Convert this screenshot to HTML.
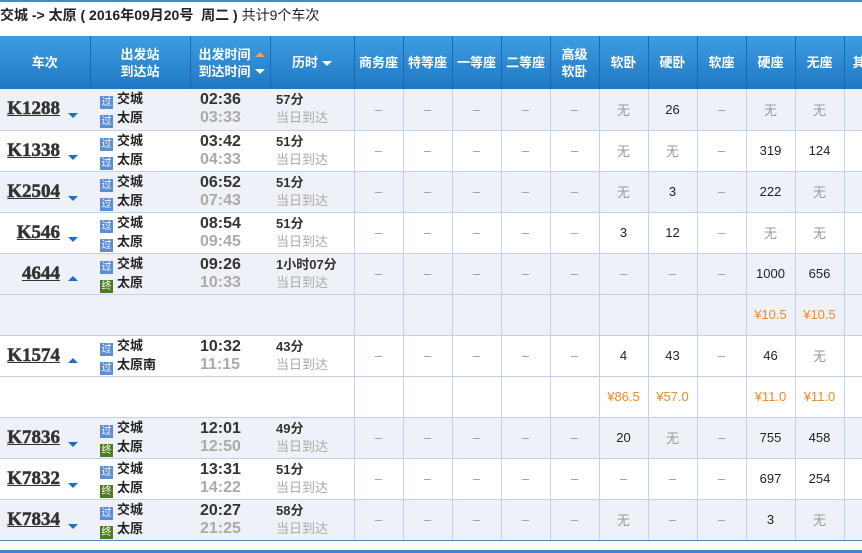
<!DOCTYPE html>
<html><head><meta charset="utf-8"><style>
*{margin:0;padding:0;box-sizing:border-box}
body{width:862px;height:553px;overflow:hidden;background:#fff;font-family:"Liberation Sans","Noto Sans CJK SC",sans-serif;color:#333;position:relative}
.topline{position:absolute;left:0;top:0;width:862px;height:2px;background:#3a8ed0}
.title{position:absolute;left:0;top:5px;font-size:14px;font-weight:bold;color:#222;white-space:nowrap}
.title span{font-weight:normal}
.wrap{position:absolute;left:0;top:36px;width:862px;height:505px;overflow:hidden}
table{border-collapse:collapse;table-layout:fixed;width:895px}
th{height:53px;background:linear-gradient(#3e9de0,#1f78c4);color:#fff;font-size:13px;font-weight:bold;line-height:17px;position:relative}
th.s{border-right:1px solid #1a6aad}
td{height:41px;border-bottom:1px solid #c3d3e3;font-size:13px;text-align:center;vertical-align:middle}
td.g{border-left:1px solid #c3d3e3;color:#999}
tr.b td{background:#eef1f8}
td.g.num{color:#222}
td.g.pr{color:#f08a24}
.tn{text-align:left;padding-left:0;position:relative}
.tn a{position:absolute;right:30px;top:9px;font-family:"Liberation Serif",serif;font-weight:900;font-size:19px;color:#333;text-decoration:underline;-webkit-text-stroke:0.5px #333}
.dn{position:absolute;left:68px;top:24px;width:0;height:0;border-left:5px solid transparent;border-right:5px solid transparent;border-top:5px solid #1c6ec6}
.up{position:absolute;left:68px;top:22px;width:0;height:0;border-left:5px solid transparent;border-right:5px solid transparent;border-bottom:5px solid #1c6ec6}
.st{text-align:left;padding-left:10px;font-weight:bold;line-height:18px;font-size:13px;color:#222}
.ic{display:inline-block;width:13px;height:13px;background:#5b8ed6;color:#fff;font-size:10px;line-height:13px;text-align:center;vertical-align:-2px;margin-right:4px;font-weight:normal}
.ic.z{background:#4e7b1e}
.tm{text-align:left;padding-left:10px;font-weight:bold;font-size:16px;line-height:18px;color:#333}
.tm i{font-style:normal;color:#aaa}
.du{text-align:left;padding-left:6px;font-size:13px;line-height:18px}
.du b{color:#333}
.du i{font-style:normal;color:#aaa}
.tri{display:inline-block;width:0;height:0;border-left:5px solid transparent;border-right:5px solid transparent;margin-left:4px;vertical-align:2px}
</style></head><body>
<div class="topline"></div>
<div class="title">交城 -&gt; 太原 ( 2016年09月20号&nbsp; 周二 ) <span>共计9个车次</span></div>
<div class="wrap"><table>
<colgroup><col style="width:90px"><col style="width:100px"><col style="width:80px"><col style="width:84px"><col style="width:49px"><col style="width:49px"><col style="width:49px"><col style="width:49px"><col style="width:49px"><col style="width:49px"><col style="width:49px"><col style="width:49px"><col style="width:49px"><col style="width:49px"><col style="width:51px"></colgroup>
<tr><th class="s">车次</th><th class="s">出发站<br>到达站</th><th class="s" style="text-align:left;padding-left:8px">出发时间<span class="tri" style="border-bottom:5px solid #f0a060"></span><br>到达时间<span class="tri" style="border-top:5px solid #fff"></span></th><th class="s">历时<span class="tri" style="border-top:5px solid #fff;vertical-align:1px"></span></th><th class="s">商务座</th><th class="s">特等座</th><th class="s">一等座</th><th class="s">二等座</th><th class="s">高级<br>软卧</th><th class="s">软卧</th><th class="s">硬卧</th><th class="s">软座</th><th class="s">硬座</th><th class="s">无座</th><th style="text-align:left;padding-left:8px">其他</th></tr>

<tr class="b"><td class="tn"><a>K1288</a><span class="dn"></span></td><td class="st"><span class="ic">过</span>交城<br><span class="ic">过</span>太原</td><td class="tm">02:36<br><i>03:33</i></td><td class="du"><b>57分</b><br><i>当日到达</i></td><td class="g">–</td><td class="g">–</td><td class="g">–</td><td class="g">–</td><td class="g">–</td><td class="g">无</td><td class="g num">26</td><td class="g">–</td><td class="g">无</td><td class="g">无</td><td class="g"></td></tr>
<tr><td class="tn"><a>K1338</a><span class="dn"></span></td><td class="st"><span class="ic">过</span>交城<br><span class="ic">过</span>太原</td><td class="tm">03:42<br><i>04:33</i></td><td class="du"><b>51分</b><br><i>当日到达</i></td><td class="g">–</td><td class="g">–</td><td class="g">–</td><td class="g">–</td><td class="g">–</td><td class="g">无</td><td class="g">无</td><td class="g">–</td><td class="g num">319</td><td class="g num">124</td><td class="g"></td></tr>
<tr class="b"><td class="tn"><a>K2504</a><span class="dn"></span></td><td class="st"><span class="ic">过</span>交城<br><span class="ic">过</span>太原</td><td class="tm">06:52<br><i>07:43</i></td><td class="du"><b>51分</b><br><i>当日到达</i></td><td class="g">–</td><td class="g">–</td><td class="g">–</td><td class="g">–</td><td class="g">–</td><td class="g">无</td><td class="g num">3</td><td class="g">–</td><td class="g num">222</td><td class="g">无</td><td class="g"></td></tr>
<tr><td class="tn"><a>K546</a><span class="dn"></span></td><td class="st"><span class="ic">过</span>交城<br><span class="ic">过</span>太原</td><td class="tm">08:54<br><i>09:45</i></td><td class="du"><b>51分</b><br><i>当日到达</i></td><td class="g">–</td><td class="g">–</td><td class="g">–</td><td class="g">–</td><td class="g">–</td><td class="g num">3</td><td class="g num">12</td><td class="g">–</td><td class="g">无</td><td class="g">无</td><td class="g"></td></tr>
<tr class="b"><td class="tn"><a>4644</a><span class="up"></span></td><td class="st"><span class="ic">过</span>交城<br><span class="ic z">终</span>太原</td><td class="tm">09:26<br><i>10:33</i></td><td class="du"><b>1小时07分</b><br><i>当日到达</i></td><td class="g">–</td><td class="g">–</td><td class="g">–</td><td class="g">–</td><td class="g">–</td><td class="g">–</td><td class="g">–</td><td class="g">–</td><td class="g num">1000</td><td class="g num">656</td><td class="g"></td></tr>
<tr class="b"><td></td><td></td><td></td><td></td><td class="g"></td><td class="g"></td><td class="g"></td><td class="g"></td><td class="g"></td><td class="g"></td><td class="g"></td><td class="g"></td><td class="g pr">¥10.5</td><td class="g pr">¥10.5</td><td class="g"></td></tr>
<tr><td class="tn"><a>K1574</a><span class="up"></span></td><td class="st"><span class="ic">过</span>交城<br><span class="ic">过</span>太原南</td><td class="tm">10:32<br><i>11:15</i></td><td class="du"><b>43分</b><br><i>当日到达</i></td><td class="g">–</td><td class="g">–</td><td class="g">–</td><td class="g">–</td><td class="g">–</td><td class="g num">4</td><td class="g num">43</td><td class="g">–</td><td class="g num">46</td><td class="g">无</td><td class="g"></td></tr>
<tr><td></td><td></td><td></td><td></td><td class="g"></td><td class="g"></td><td class="g"></td><td class="g"></td><td class="g"></td><td class="g pr">¥86.5</td><td class="g pr">¥57.0</td><td class="g"></td><td class="g pr">¥11.0</td><td class="g pr">¥11.0</td><td class="g"></td></tr>
<tr class="b"><td class="tn"><a>K7836</a><span class="dn"></span></td><td class="st"><span class="ic">过</span>交城<br><span class="ic z">终</span>太原</td><td class="tm">12:01<br><i>12:50</i></td><td class="du"><b>49分</b><br><i>当日到达</i></td><td class="g">–</td><td class="g">–</td><td class="g">–</td><td class="g">–</td><td class="g">–</td><td class="g num">20</td><td class="g">无</td><td class="g">–</td><td class="g num">755</td><td class="g num">458</td><td class="g"></td></tr>
<tr><td class="tn"><a>K7832</a><span class="dn"></span></td><td class="st"><span class="ic">过</span>交城<br><span class="ic z">终</span>太原</td><td class="tm">13:31<br><i>14:22</i></td><td class="du"><b>51分</b><br><i>当日到达</i></td><td class="g">–</td><td class="g">–</td><td class="g">–</td><td class="g">–</td><td class="g">–</td><td class="g">–</td><td class="g">–</td><td class="g">–</td><td class="g num">697</td><td class="g num">254</td><td class="g"></td></tr>
<tr class="b"><td class="tn" style="border-bottom:1px solid #4a86c0"><a>K7834</a><span class="dn"></span></td><td class="st" style="border-bottom:1px solid #4a86c0"><span class="ic">过</span>交城<br><span class="ic z">终</span>太原</td><td class="tm" style="border-bottom:1px solid #4a86c0">20:27<br><i>21:25</i></td><td class="du" style="border-bottom:1px solid #4a86c0"><b>58分</b><br><i>当日到达</i></td><td class="g">–</td><td class="g">–</td><td class="g">–</td><td class="g">–</td><td class="g">–</td><td class="g">无</td><td class="g">–</td><td class="g">–</td><td class="g num">3</td><td class="g">无</td><td class="g"></td></tr>
</table></div>
<div style="position:absolute;left:0;top:540px;width:862px;height:1px;background:#4a86c0"></div>
<div style="position:absolute;left:0;top:550px;width:862px;height:3px;background:#3a86c8"></div>
</body></html>
